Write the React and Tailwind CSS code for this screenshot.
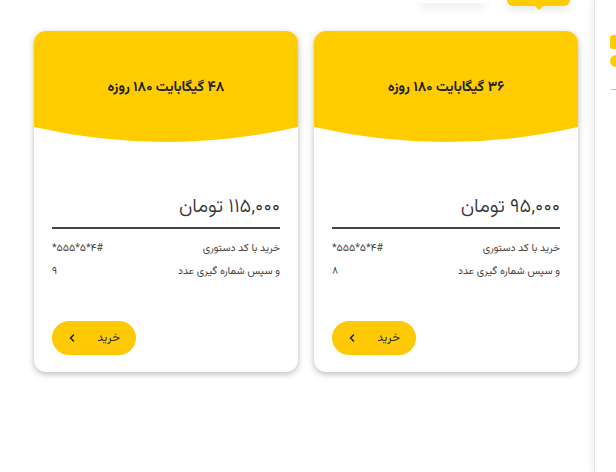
import React from "react";

const plans = [
  { title: "۳۶ گیگابایت ۱۸۰ روزه", price: "۹۵,۰۰۰ تومان", num: "۸" },
  { title: "۴۸ گیگابایت ۱۸۰ روزه", price: "۱۱۵,۰۰۰ تومان", num: "۹" },
];

const code = ["*", "۵", "۵", "۵", "*", "۵", "*", "۴", "#"];

function Card({ p }) {
  return (
    <div className="w-[264px] h-[341px] bg-white rounded-[12px] shadow-[0_2px_6px_rgba(0,0,0,0.28)] overflow-hidden flex flex-col">
      <div className="bg-[#FFCC00] h-[96px] flex justify-center pt-[46px]">
        <div className="text-[14px] leading-[22px] font-bold text-[#222]">{p.title}</div>
      </div>
      <svg width="264" height="16" viewBox="0 0 264 16" className="block">
        <path d="M0 0 H264 Q132 30 0 0 Z" fill="#FFCC00" />
      </svg>
      <div className="px-[18px] flex flex-col">
        <div className="mt-[50px] text-[20px] leading-[28px] text-[#333] font-light">{p.price}</div>
        <div className="mt-[6px] h-[1.5px] bg-[#444]" />
        <div className="mt-[13px] flex justify-between text-[10.5px] leading-[14px] text-[#444]">
          <span>خرید با کد دستوری</span>
          <span dir="ltr" className="flex">
            {code.map((c, i) => (
              <span key={i}>{c}</span>
            ))}
          </span>
        </div>
        <div className="mt-[9px] flex justify-between text-[10.5px] leading-[14px] text-[#444]">
          <span>و سپس شماره گیری عدد</span>
          <span>{p.num}</span>
        </div>
        <div className="mt-[42px] flex justify-end">
          <button className="w-[84px] h-[34px] rounded-full bg-[#FFC905] flex items-center justify-between pr-[16px] pl-[16px] text-[12px] text-[#333]">
            <span>خرید</span>
            <svg width="8" height="10" viewBox="0 0 8 10">
              <path d="M5.5 2 L2.5 5 L5.5 8" stroke="#222" strokeWidth="1.6" fill="none" strokeLinecap="round" strokeLinejoin="round" />
            </svg>
          </button>
        </div>
      </div>
    </div>
  );
}

export default function App() {
  return (
    <div
      dir="rtl"
      className="w-[616px] h-[472px] bg-white overflow-hidden flex"
      style={{ fontFamily: '"Vazirmatn", "Noto Sans Arabic", "DejaVu Sans", sans-serif' }}
    >
      <div className="w-[22px] h-full bg-white border-l border-[#e3e3e3] shadow-[-3px_0_6px_rgba(0,0,0,0.06)] flex flex-col items-start pt-[35px] shrink-0 z-10">
        <div className="w-[6px] h-[14px] bg-[#FFCC00] rounded-l-[3px]" />
        <div className="mt-[6px] w-[6px] h-[12px] bg-[#FFCC00] rounded-l-full" />
        <div className="mt-[22px] w-[5px] h-[1px] bg-[#bbb]" />
      </div>
      <div className="flex-1 flex flex-col">
        <div className="h-[31px] flex items-start pr-[24px] gap-[21px]">
          <div className="relative w-[63px] h-[6px] bg-[#FFCC00] rounded-b-[6px] shadow-[0_2px_8px_rgba(0,0,0,0.15)]">
            <div className="absolute left-1/2 -translate-x-1/2 top-[5px] w-0 h-0 border-l-[5px] border-r-[5px] border-t-[5px] border-l-transparent border-r-transparent border-t-[#FFCC00]" />
          </div>
          <div className="w-[66px] h-[3px] bg-white rounded-b-[6px] shadow-[0_3px_10px_rgba(0,0,0,0.18)]" />
        </div>
        <div className="flex gap-[16px] pr-[16px]">
          {plans.map((p, i) => (
            <Card key={i} p={p} />
          ))}
        </div>
      </div>
    </div>
  );
}
